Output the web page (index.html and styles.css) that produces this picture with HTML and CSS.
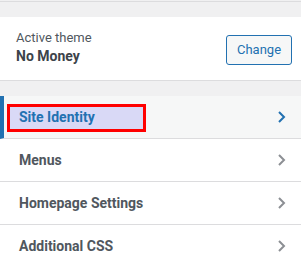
FILE: index.html
```html
<!DOCTYPE html>
<html lang="en">
<head>
  <meta charset="UTF-8">
  <title>Customizer</title>
  <link rel="stylesheet" href="styles.css">
</head>
<body>

<div class="top-strip"></div>

<div class="theme-box">
  <div class="theme-info">
    <div class="theme-label">Active theme</div>
    <div class="theme-name">No Money</div>
  </div>
  <button class="change-button">Change</button>
</div>

<div class="gap"></div>

<ul class="panel-list">
  <li class="panel-item active">
    <span class="highlight"></span>
    <span class="panel-title">Site Identity</span>
    <svg class="chevron" width="9" height="14" viewBox="0 0 9 14"><polyline points="2,2 7,7 2,12" fill="none" stroke="currentColor" stroke-width="2"/></svg>
  </li>
  <li class="panel-item">
    <span class="panel-title">Menus</span>
    <svg class="chevron" width="9" height="14" viewBox="0 0 9 14"><polyline points="2,2 7,7 2,12" fill="none" stroke="currentColor" stroke-width="2"/></svg>
  </li>
  <li class="panel-item">
    <span class="panel-title">Homepage Settings</span>
    <svg class="chevron" width="9" height="14" viewBox="0 0 9 14"><polyline points="2,2 7,7 2,12" fill="none" stroke="currentColor" stroke-width="2"/></svg>
  </li>
  <li class="panel-item">
    <span class="panel-title">Additional CSS</span>
    <svg class="chevron" width="9" height="14" viewBox="0 0 9 14"><polyline points="2,2 7,7 2,12" fill="none" stroke="currentColor" stroke-width="2"/></svg>
  </li>
</ul>

</body>
</html>
```

FILE: styles.css
```css
body {
  font-family: Roboto, "Liberation Sans", sans-serif;
  background-color: #f0f0f1;
  margin: 0;
  padding: 0;
}
.top-strip {
  margin-top: 1px;
  height: 15px;
  border-top: 1px solid #dcdcde;
}
.theme-box {
  background-color: white;
  height: 63px;
  padding: 0 9px 0 16px;
  display: flex;
  justify-content: space-between;
  align-items: center;
  border-bottom: 1px solid #dcdcde;
}
.theme-info {
  margin-top: -4px;
}
.theme-label {
  font-size: 13px;
  line-height: 18px;
  color: #50575e;
}
.theme-name {
  font-size: 14px;
  line-height: 18px;
  font-weight: bold;
  color: #3c434a;
}
.change-button {
  font-family: inherit;
  font-size: 13px;
  color: #2271b1;
  background-color: #f6f7f7;
  border: 1px solid #2271b1;
  border-radius: 3px;
  width: 66px;
  height: 30px;
  padding: 0;
  margin-top: 2px;
}
.gap {
  height: 15px;
}
.panel-list {
  list-style: none;
  margin: 0;
  padding: 0;
  background-color: white;
}
.panel-item {
  position: relative;
  height: 42px;
  padding: 0 15px 0 19px;
  display: flex;
  justify-content: space-between;
  align-items: center;
  border-bottom: 1px solid #dcdcde;
  color: #8c8f94;
}
.panel-title {
  position: relative;
  font-size: 14px;
  font-weight: bold;
  color: #50575e;
}
.panel-item.active {
  background-color: #f6f7f7;
  border-left: 4px solid #2271b1;
  padding-left: 15px;
  color: #2271b1;
}
.panel-item.active .panel-title {
  color: #2271b1;
}
.highlight {
  position: absolute;
  left: 3px;
  top: 8px;
  width: 133px;
  height: 22px;
  border: 3px solid #f00;
  background-color: #d9d9f6;
}
```
